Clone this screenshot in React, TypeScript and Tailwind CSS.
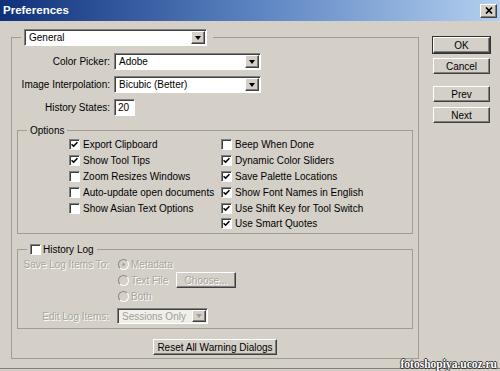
import React from "react";

const raised =
  "border border-t-white border-l-white border-r-[#404040] border-b-[#404040] shadow-[inset_-1px_-1px_0_#808080]";
const sunken =
  "border border-t-[#808080] border-l-[#808080] border-r-white border-b-white shadow-[inset_1px_1px_0_#404040]";
const etched = "border border-[#a09d95]";
const dim = "text-[#a8a59d] [text-shadow:1px_1px_0_#fff]";

function Check({ on }: { on?: boolean }) {
  return (
    <span className={`w-[11px] h-[11px] shrink-0 bg-white flex items-center justify-center ${sunken}`}>
      {on && (
        <svg width="7" height="7" viewBox="0 0 7 7">
          <path d="M0.6 3.2 L2.6 5.2 L6.4 1.2" stroke="#000" strokeWidth="1.6" fill="none" />
        </svg>
      )}
    </span>
  );
}

function Radio({ on }: { on?: boolean }) {
  return (
    <span className="w-[11px] h-[11px] shrink-0 rounded-full border border-t-[#8a877f] border-l-[#8a877f] border-r-white border-b-white bg-[#d4d0c8] flex items-center justify-center">
      {on && <span className="w-[3px] h-[3px] rounded-full bg-[#a8a59d]" />}
    </span>
  );
}

function Combo({ value, w, h = "h-[17px]", off }: { value: string; w: string; h?: string; off?: boolean }) {
  return (
    <div className={`${w} ${h} flex items-center p-[1px] ${sunken} ${off ? "bg-[#f1efea]" : "bg-white"}`}>
      <span className={`flex-1 pl-[3px] ${off ? "text-[#a09d95]" : ""}`}>{value}</span>
      <span className={`w-[14px] h-full flex items-center justify-center bg-[#d4d0c8] ${raised}`}>
        <span
          className={`w-0 h-0 border-x-[3px] border-x-transparent border-t-[4px] ${
            off ? "border-t-[#a09d95]" : "border-t-black"
          }`}
        />
      </span>
    </div>
  );
}

function Btn({ children, className = "", def }: { children: React.ReactNode; className?: string; def?: boolean }) {
  return (
    <button
      className={`h-[16px] flex items-center justify-center bg-[#d4d0c8] ${raised} ${
        def ? "outline outline-1 outline-[#333]" : ""
      } ${className}`}
    >
      {children}
    </button>
  );
}

function Row({ on, label }: { on?: boolean; label: string }) {
  return (
    <div className="h-[15.8px] flex items-center gap-[3px]">
      <Check on={on} />
      <span>{label}</span>
    </div>
  );
}

export default function App() {
  return (
    <div className="relative w-[500px] h-[371px] overflow-hidden flex flex-col bg-[#d4d0c8] text-black text-[10px] leading-[13px] whitespace-nowrap font-['Liberation_Sans',Arial,sans-serif]">
      {/* title bar */}
      <div className="h-[21px] shrink-0 flex items-center pl-[3px] pr-[3px] bg-linear-to-r from-[#10307a] via-[#5a82c0] to-[#b4d0ee]">
        <span className="text-white font-bold text-[11.5px]">Preferences</span>
        <span className={`ml-auto w-[17px] h-[14px] flex items-center justify-center bg-[#d4d0c8] ${raised}`}>
          <svg width="8" height="7" viewBox="0 0 8 7">
            <path d="M1 0.5 L7 6.5 M7 0.5 L1 6.5" stroke="#000" strokeWidth="1.7" />
          </svg>
        </span>
      </div>

      <div className="h-[348px] shrink-0 flex items-start border-b border-[#808080]">
        {/* main group */}
        <fieldset className={`ml-[11px] mt-[8px] w-[408px] h-[330px] pt-[7px] flex flex-col ${etched}`}>
          <legend className="ml-[9px] pl-[3px] pr-[6px]">
            <Combo value="General" w="w-[183px]" />
          </legend>

          <div className="grid grid-cols-[98px_auto] gap-x-[4px] gap-y-[6px] items-center">
            <span className="text-right">Color Picker:</span>
            <Combo value="Adobe" w="w-[147px]" />
            <span className="text-right">Image Interpolation:</span>
            <Combo value="Bicubic (Better)" w="w-[147px]" />
            <span className="text-right">History States:</span>
            <div className={`w-[21px] h-[17px] bg-white pl-[3px] flex items-center ${sunken}`}>20</div>
          </div>

          <fieldset className={`ml-[5px] mt-[8px] w-[396px] h-[110px] ${etched}`}>
            <legend className="ml-[9px] px-[3px]">Options</legend>
            <div className="flex pl-[51px]">
              <div className="w-[152px] flex flex-col">
                <Row on label="Export Clipboard" />
                <Row on label="Show Tool Tips" />
                <Row label="Zoom Resizes Windows" />
                <Row label="Auto-update open documents" />
                <Row label="Show Asian Text Options" />
              </div>
              <div className="flex flex-col">
                <Row label="Beep When Done" />
                <Row on label="Dynamic Color Sliders" />
                <Row on label="Save Palette Locations" />
                <Row on label="Show Font Names in English" />
                <Row on label="Use Shift Key for Tool Switch" />
                <Row on label="Use Smart Quotes" />
              </div>
            </div>
          </fieldset>

          <fieldset className={`ml-[5px] mt-[9px] w-[396px] h-[86px] ${etched}`}>
            <legend className="ml-[9px] px-[3px]">
              <span className="flex items-center gap-[2px]">
                <Check />
                <span>History Log</span>
              </span>
            </legend>
            <div className="grid grid-cols-[91px_auto] gap-x-[9px]">
              <span className={`h-[16px] flex items-center justify-end ${dim}`}>Save Log Items To:</span>
              <div className="flex flex-col">
                <div className="h-[16px] flex items-center gap-[2px]">
                  <Radio on />
                  <span className={dim}>Metadata</span>
                </div>
                <div className="h-[16px] flex items-center gap-[2px]">
                  <Radio />
                  <span className={`w-[43px] ${dim}`}>Text File</span>
                  <Btn className={`w-[60px] ${dim}`}>Choose...</Btn>
                </div>
                <div className="h-[16px] flex items-center gap-[2px]">
                  <Radio />
                  <span className={dim}>Both</span>
                </div>
              </div>
              <span className={`mt-[4px] h-[16px] flex items-center justify-end ${dim}`}>Edit Log Items:</span>
              <div className="mt-[4px] -ml-[1px]">
                <Combo value="Sessions Only" w="w-[91px]" h="h-[16px]" off />
              </div>
            </div>
          </fieldset>

          <Btn className="mt-[10px] w-[124px] self-center">Reset All Warning Dialogs</Btn>
        </fieldset>

        {/* buttons */}
        <div className="ml-[14px] mt-[16px] flex flex-col">
          <Btn def className="w-[57px]">OK</Btn>
          <Btn className="w-[57px] mt-[5px]">Cancel</Btn>
          <Btn className="w-[57px] mt-[12px]">Prev</Btn>
          <Btn className="w-[57px] mt-[5px]">Next</Btn>
        </div>
      </div>

      <span className="absolute right-[3px] bottom-[0px] text-white font-bold text-[11.5px] leading-[13px] font-['Liberation_Serif',serif] [text-shadow:1px_0_0_#333,-1px_0_0_#333,0_1px_0_#333,0_-1px_0_#333]">
        fotoshopiya.ucoz.ru
      </span>
    </div>
  );
}
